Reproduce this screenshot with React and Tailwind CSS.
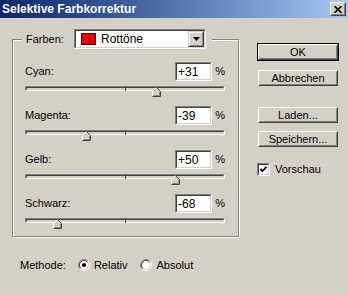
import React from "react";

const FONT = { fontFamily: '"Liberation Sans", Arial, sans-serif' };

function Sunken({ className = "", innerClassName = "", children }) {
  return (
    <div className={"border border-t-[#808080] border-l-[#808080] border-b-white border-r-white " + className}>
      <div className={"h-full w-full border border-t-[#404040] border-l-[#404040] border-b-[#d4d0c8] border-r-[#d4d0c8] " + innerClassName}>
        {children}
      </div>
    </div>
  );
}

function Button({ children, className = "" }) {
  return (
    <div className={"h-[16px] border border-t-white border-l-white border-b-[#404040] border-r-[#404040] bg-[#d4d0c8] " + className}>
      <div className="h-full w-full border border-t-[#d4d0c8] border-l-[#d4d0c8] border-b-[#808080] border-r-[#808080] flex items-center justify-center text-[11px] leading-none text-black">
        {children}
      </div>
    </div>
  );
}

function Thumb() {
  return (
    <svg width="9" height="10" viewBox="0 0 9 10" className="block">
      <path d="M4.5 0.5 L8.5 4.5 V9.5 H0.5 V4.5 Z" fill="#d4d0c8" />
      <path d="M0.5 9 V4.5 L4.5 0.5" fill="none" stroke="#ffffff" strokeWidth="1" />
      <path d="M4.5 0.5 L8.5 4.5 V9.5 H0.5" fill="none" stroke="#404040" strokeWidth="1" />
      <path d="M7.5 5 V8.5 H1.5" fill="none" stroke="#808080" strokeWidth="1" />
    </svg>
  );
}

function SliderRow({ label, value }) {
  const text = value > 0 ? "+" + value : String(value);
  return (
    <div className="h-[44px] flex flex-col">
      <div className="flex items-center h-[19px] w-[200px]">
        <span className="flex-1 text-[11px] text-black leading-none">{label}</span>
        <Sunken className="w-[37px] h-[19px]" innerClassName="bg-white flex items-center pl-[1px]">
          <span className="text-[12px] leading-none text-black">{text}</span>
        </Sunken>
        <span className="w-[13px] text-right text-[11px] leading-none text-black">%</span>
      </div>
      <div className="mt-[5px] relative w-[200px] h-[5px]">
        <div className="h-full w-full border border-t-[#808080] border-l-[#808080] border-b-white border-r-white">
          <div className="h-full w-full border border-t-[#404040] border-l-[#404040] border-b-[#d4d0c8] border-r-[#d4d0c8] bg-[#d4d0c8]" />
        </div>
        <div className="absolute left-[100px] top-0 w-px h-[5px] bg-[#404040]" />
        <div className="absolute top-[1px]" style={{ left: value + 100 - 4 + "px" }}>
          <Thumb />
        </div>
      </div>
    </div>
  );
}

function Radio({ checked }) {
  return (
    <svg width="12" height="12" viewBox="0 0 12 12" className="block">
      <circle cx="6" cy="6" r="4.5" fill="#ffffff" />
      <path d="M2.11 9.89 A5.5 5.5 0 0 1 9.89 2.11" fill="none" stroke="#808080" />
      <path d="M9.89 2.11 A5.5 5.5 0 0 1 2.11 9.89" fill="none" stroke="#ffffff" />
      <path d="M2.82 9.18 A4.5 4.5 0 0 1 9.18 2.82" fill="none" stroke="#404040" />
      <path d="M9.18 2.82 A4.5 4.5 0 0 1 2.82 9.18" fill="none" stroke="#d4d0c8" />
      {checked && <circle cx="6" cy="6" r="2" fill="#000000" />}
    </svg>
  );
}

export default function App() {
  return (
    <div className="w-[348px] h-[295px] bg-[#d4d0c8] flex flex-col overflow-hidden" style={FONT}>
      {/* Title bar */}
      <div className="h-[18px] flex items-center justify-between bg-linear-to-r from-[#0a246a] to-[#a6caf0]">
        <span className="pl-[2px] text-white font-bold text-[12px] leading-none">Selektive Farbkorrektur</span>
        <div className="mr-[2px] w-[16px] h-[14px] border border-t-white border-l-white border-b-[#404040] border-r-[#404040] bg-[#d4d0c8]">
          <div className="h-full w-full border border-t-[#d4d0c8] border-l-[#d4d0c8] border-b-[#808080] border-r-[#808080] flex items-center justify-center">
            <svg width="8" height="7" viewBox="0 0 8 7" className="block">
              <path d="M0.5 0 L7.5 7 M7.5 0 L0.5 7" stroke="#000" strokeWidth="1.6" />
            </svg>
          </div>
        </div>
      </div>

      <div className="flex flex-1">
        {/* Left column */}
        <div className="pl-[12px] flex flex-col">
          <div className="mt-[21px] relative w-[228px] h-[199px] border border-t-[#808080] border-l-[#808080] border-b-white border-r-white">
            <div className="h-full w-full border border-t-white border-l-white border-b-[#808080] border-r-[#808080] pt-[21px] pl-[11px]">
              <SliderRow label="Cyan:" value={31} />
              <SliderRow label="Magenta:" value={-39} />
              <SliderRow label="Gelb:" value={50} />
              <SliderRow label="Schwarz:" value={-68} />
            </div>
            {/* legend */}
            <div className="absolute left-[9px] top-[-11px] h-[20px] w-[190px] bg-[#d4d0c8] flex items-center pl-[4px]">
              <span className="text-[11px] leading-none text-black w-[48px]">Farben:</span>
              <Sunken className="w-[132px] h-[20px]" innerClassName="bg-white flex items-center">
                <div className="ml-[5px] w-[15px] h-[12px] bg-[#e00000] border border-[#600000]" />
                <span className="ml-[5px] flex-1 text-[12px] leading-none text-black">Rottöne</span>
                <div className="w-[16px] h-[16px] border border-t-[#d4d0c8] border-l-[#d4d0c8] border-b-[#404040] border-r-[#404040] bg-[#d4d0c8]">
                  <div className="h-full w-full border border-t-white border-l-white border-b-[#808080] border-r-[#808080] flex items-center justify-center">
                    <svg width="7" height="4" viewBox="0 0 7 4" className="block">
                      <path d="M0 0 H7 L3.5 4 Z" fill="#000" />
                    </svg>
                  </div>
                </div>
              </Sunken>
            </div>
          </div>

          <div className="mt-[20px] h-[14px] flex items-center pl-[8px] text-[11px] leading-none text-black">
            <span>Methode:</span>
            <span className="ml-[12px]"><Radio checked /></span>
            <span className="ml-[4px]">Relativ</span>
            <span className="ml-[12px]"><Radio /></span>
            <span className="ml-[5px]">Absolut</span>
          </div>
        </div>

        {/* Right column */}
        <div className="ml-[17px] flex flex-col">
          <div className="mt-[25px] w-[82px] h-[18px] border border-black">
            <Button className="w-[80px]">OK</Button>
          </div>
          <Button className="mt-[9px] ml-[1px] w-[80px]">Abbrechen</Button>
          <Button className="mt-[21px] ml-[1px] w-[80px]">Laden...</Button>
          <Button className="mt-[8px] ml-[1px] w-[80px]">Speichern...</Button>
          <div className="mt-[16px] flex items-center">
            <Sunken className="w-[13px] h-[13px]" innerClassName="bg-white flex items-center justify-center">
              <svg width="7" height="7" viewBox="0 0 7 7" className="block">
                <path d="M0.5 3 L2.5 5 L6.5 1" fill="none" stroke="#000" strokeWidth="1.8" />
              </svg>
            </Sunken>
            <span className="ml-[5px] text-[11px] leading-none text-black">Vorschau</span>
          </div>
        </div>
      </div>
    </div>
  );
}
